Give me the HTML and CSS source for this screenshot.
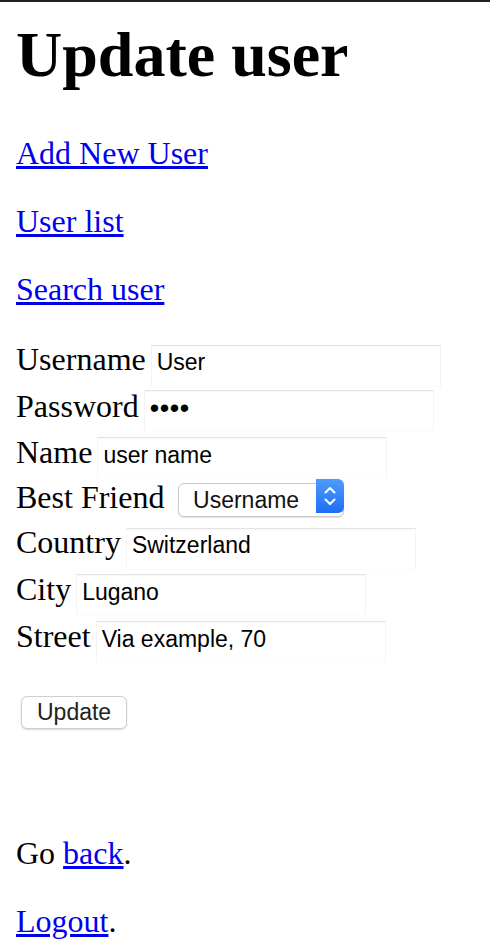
FILE: index.html
```html
<!DOCTYPE html>
<html>
<head>
<meta charset="utf-8">
<title>Update user</title>
<link rel="stylesheet" href="styles.css">
</head>
<body>
<div class="topbar"></div>
<main class="page">
  <h1 class="title">Update user</h1>
  <p class="para"><a href="#">Add New User</a></p>
  <p class="para"><a href="#">User list</a></p>
  <p class="para"><a href="#">Search user</a></p>
  <form class="form">
    <div class="row"><label class="label">Username</label><input class="field" type="text" value="User"></div>
    <div class="row"><label class="label">Password</label><input class="field pw" type="text" value="&#8226;&#8226;&#8226;&#8226;"></div>
    <div class="row"><label class="label">Name</label><input class="field" type="text" value="user name"></div>
    <div class="row row-select"><label class="label">Best Friend</label>
      <span class="select-wrap">
        <select class="select"><option>Username</option></select>
        <span class="select-arrows"><svg width="12" height="20" viewBox="0 0 12 20"><path d="M1.5 6.5 L6 2 L10.5 6.5" fill="none" stroke="#fff" stroke-width="2" stroke-linecap="round" stroke-linejoin="round"/><path d="M1.5 13.5 L6 18 L10.5 13.5" fill="none" stroke="#fff" stroke-width="2" stroke-linecap="round" stroke-linejoin="round"/></svg></span>
      </span>
    </div>
    <div class="row"><label class="label">Country</label><input class="field" type="text" value="Switzerland"></div>
    <div class="row"><label class="label">City</label><input class="field" type="text" value="Lugano"></div>
    <div class="row"><label class="label">Street</label><input class="field" type="text" value="Via example, 70"></div>
    <p class="para submit"><button class="btn" type="button">Update</button></p>
  </form>
  <p class="para spaced">Go <a href="#">back</a>.</p>
  <p class="para"><a href="#">Logout</a>.</p>
</main>
</body>
</html>
```

FILE: styles.css
```css
html, body {
  margin: 0;
  padding: 0;
  background: #fff;
}
body {
  font-family: "Liberation Serif", "Times New Roman", serif;
  font-size: 32px;
  line-height: 36px;
  color: #000;
}
.topbar {
  height: 2px;
  background: #222;
}
.page {
  padding: 0 16px;
}
.title {
  font-size: 64px;
  font-weight: bold;
  margin: 16px 0 42.88px;
  line-height: 74px;
}
.para {
  margin: 32px 0;
}
.submit {
  margin-top: 28px;
}
a {
  color: #0000ee;
  text-decoration: underline;
}
.form {
  padding-top: 1px;
}
.row {
  display: flex;
  align-items: baseline;
  gap: 5px;
  margin-top: 1.3px;
}
.label {
  line-height: 36px;
}
.field {
  font-family: "Liberation Sans", Arial, sans-serif;
  font-size: 23px;
  line-height: 26px;
  color: #000;
  width: 290px;
  height: 42px;
  box-sizing: border-box;
  padding: 4px 5px 10px;
  margin: 0;
  border: 1px solid #f4f4f4;
  border-top-color: #e4e4e4;
  border-bottom-color: #fbfbfb;
  box-shadow: inset 0 1px 1px rgba(0,0,0,0.03);
  background: #fff;
  outline: none;
}
.pw {
  font-size: 27px;
  letter-spacing: 0.6px;
}
.row-select {
  margin-top: -0.7px;
  margin-bottom: 7.5px;
}
.select-wrap {
  position: relative;
  display: inline-block;
  margin-left: 8.6px;
  line-height: normal;
}
.select {
  -webkit-appearance: none;
  appearance: none;
  font-family: "Liberation Sans", Arial, sans-serif;
  font-size: 23px;
  color: #111;
  width: 166px;
  height: 34px;
  box-sizing: border-box;
  padding: 0 30px 0 14px;
  margin: 0;
  border: 1px solid #c9c9c9;
  border-radius: 6px;
  background: #fff;
  box-shadow: 0 1px 1px rgba(0,0,0,0.12);
  line-height: normal;
}
.select-arrows {
  position: absolute;
  top: 0;
  right: 0;
  width: 28px;
  height: 34px;
  border-radius: 0 6px 6px 0;
  background: linear-gradient(#4e9cfc, #1d6ff5);
  display: flex;
  align-items: center;
  justify-content: center;
  pointer-events: none;
}
.btn {
  font-family: "Liberation Sans", Arial, sans-serif;
  font-size: 23px;
  color: #222;
  background: #fff;
  border: 1px solid #cfcfcf;
  border-radius: 6px;
  box-shadow: 0 1px 2px rgba(0,0,0,0.15);
  padding: 2px 15px 3px;
  margin: 0 0 0 5px;
  height: 33px;
  line-height: normal;
  vertical-align: baseline;
}
.spaced {
  margin-top: 105.5px;
}
```
